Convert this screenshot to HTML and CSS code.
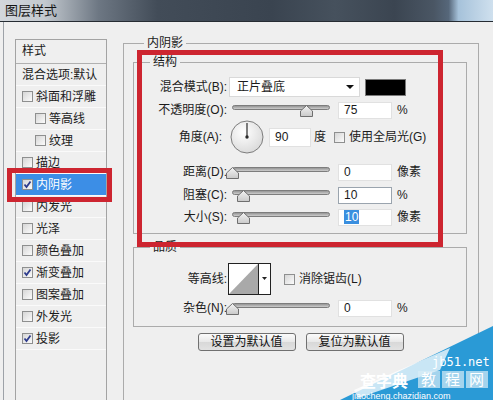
FILE: index.html
```html
<!DOCTYPE html>
<html lang="zh-CN">
<head>
  <meta charset="UTF-8" />
  <title>图层样式</title>
  <link rel="stylesheet" href="styles.css">
</head>
<body>
  <svg class="defs" width="0" height="0">
    <defs>
      <linearGradient id="trk" x1="0" y1="0" x2="0" y2="1">
        <stop offset="0" stop-color="#8c8c8c"/>
        <stop offset="1" stop-color="#d6d6d6"/>
      </linearGradient>
      <linearGradient id="thb" x1="0" y1="0" x2="0" y2="1">
        <stop offset="0" stop-color="#f4f4f4"/>
        <stop offset="1" stop-color="#c9c9c9"/>
      </linearGradient>
      <radialGradient id="dialg" cx="0.4" cy="0.35" r="0.7">
        <stop offset="0" stop-color="#ffffff"/>
        <stop offset="1" stop-color="#d9d9d9"/>
      </radialGradient>
    </defs>
  </svg>

  <div class="titlebar">图层样式</div>

  <div class="dialog">
    <div class="style-list">
      <div class="list-head">样式</div>
      <div class="list-item">混合选项:默认</div>
      <div class="list-item"><i class="cb"></i>斜面和浮雕</div>
      <div class="list-item sub"><i class="cb"></i>等高线</div>
      <div class="list-item sub"><i class="cb"></i>纹理</div>
      <div class="list-item"><i class="cb"></i>描边</div>
      <div class="list-item selected"><i class="cb"><svg viewBox="0 0 9 9"><path d="M1.5 4.5 L3.5 7 L7.5 1.5"/></svg></i>内阴影</div>
      <div class="list-item"><i class="cb"></i>内发光</div>
      <div class="list-item"><i class="cb"></i>光泽</div>
      <div class="list-item"><i class="cb"></i>颜色叠加</div>
      <div class="list-item"><i class="cb"><svg viewBox="0 0 9 9"><path d="M1.5 4.5 L3.5 7 L7.5 1.5"/></svg></i>渐变叠加</div>
      <div class="list-item"><i class="cb"></i>图案叠加</div>
      <div class="list-item"><i class="cb"></i>外发光</div>
      <div class="list-item"><i class="cb"><svg viewBox="0 0 9 9"><path d="M1.5 4.5 L3.5 7 L7.5 1.5"/></svg></i>投影</div>
    </div>

    <fieldset class="group outer">
      <legend>内阴影</legend>

      <fieldset class="group inner structure">
        <legend>结构</legend>

        <div class="row r-blend">
          <span class="lbl">混合模式(B):</span>
          <div class="select">正片叠底<i class="arrow"></i></div>
          <div class="swatch"></div>
        </div>

        <div class="row r-opacity">
          <span class="lbl">不透明度(O):</span>
          <svg class="slider" width="104" height="20" viewBox="0 0 104 20">
            <rect class="track" x="6.5" y="5.5" width="97" height="4" rx="2"/>
            <path class="thumb" transform="translate(80.5 0)" d="M-6 16.5 H6 V11 L0 5.5 L-6 11 Z"/>
          </svg>
          <div class="field">75</div><span class="unit">%</span>
        </div>

        <div class="row r-angle">
          <span class="lbl">角度(A):</span>
          <svg class="dial" width="34" height="34" viewBox="0 0 34 34">
            <circle cx="17" cy="17" r="16" fill="url(#dialg)" stroke="#7d7d7d"/>
            <line x1="17" y1="17" x2="17" y2="3" stroke="#2a2a2a" stroke-width="1.2"/>
            <circle cx="17" cy="17" r="1.7" fill="#2a2a2a"/>
          </svg>
          <div class="field angle">90</div><span class="unit deg">度</span>
          <i class="cb global"></i><span class="cb-text">使用全局光(G)</span>
        </div>

        <div class="row r-distance">
          <span class="lbl">距离(D):</span>
          <svg class="slider" width="104" height="20" viewBox="0 0 104 20">
            <rect class="track" x="6.5" y="5.5" width="97" height="4" rx="2"/>
            <path class="thumb" transform="translate(6.5 0)" d="M-6 16.5 H6 V11 L0 5.5 L-6 11 Z"/>
          </svg>
          <div class="field">0</div><span class="unit">像素</span>
        </div>

        <div class="row r-choke">
          <span class="lbl">阻塞(C):</span>
          <svg class="slider" width="104" height="20" viewBox="0 0 104 20">
            <rect class="track" x="6.5" y="5.5" width="97" height="4" rx="2"/>
            <path class="thumb" transform="translate(17.5 0)" d="M-6 16.5 H6 V11 L0 5.5 L-6 11 Z"/>
          </svg>
          <div class="field focused">10</div><span class="unit">%</span>
        </div>

        <div class="row r-size">
          <span class="lbl">大小(S):</span>
          <svg class="slider" width="104" height="20" viewBox="0 0 104 20">
            <rect class="track" x="6.5" y="5.5" width="97" height="4" rx="2"/>
            <path class="thumb" transform="translate(17.5 0)" d="M-6 16.5 H6 V11 L0 5.5 L-6 11 Z"/>
          </svg>
          <div class="field"><span class="sel-text">10</span></div><span class="unit">像素</span>
        </div>
      </fieldset>

      <fieldset class="group inner quality">
        <legend>品质</legend>

        <div class="row r-contour">
          <span class="lbl">等高线:</span>
          <svg class="contour" width="43" height="32" viewBox="0 0 43 32">
            <rect x="0.5" y="0.5" width="42" height="31" fill="#fff" stroke="#222"/>
            <polygon points="1,31 30,1 30,31" fill="#a9a9a9"/>
            <line x1="30.5" y1="1" x2="30.5" y2="31" stroke="#222"/>
            <polygon points="34,14 39,14 36.5,17" fill="#222"/>
          </svg>
          <i class="cb aa"></i><span class="cb-text">消除锯齿(L)</span>
        </div>

        <div class="row r-noise">
          <span class="lbl">杂色(N):</span>
          <svg class="slider" width="104" height="20" viewBox="0 0 104 20">
            <rect class="track" x="6.5" y="5.5" width="97" height="4" rx="2"/>
            <path class="thumb" transform="translate(6.5 0)" d="M-6 16.5 H6 V11 L0 5.5 L-6 11 Z"/>
          </svg>
          <div class="field">0</div><span class="unit">%</span>
        </div>
      </fieldset>

      <div class="buttons">
        <button>设置为默认值</button>
        <button>复位为默认值</button>
      </div>
    </fieldset>
  </div>

  <!-- red marks drawn over the screenshot -->
  <div class="mark mark-list"></div>
  <div class="mark mark-struct"></div>

  <svg class="watermark" width="153" height="80" viewBox="0 0 153 80">
    <polygon points="0,80 153,6 153,80" fill="#2a9ad6"/>
    <polygon points="14,70 110,28 100,50 18,78" fill="#ffffff" opacity="0.75"/>
    <text x="92" y="46" class="wm-site">jb51.net</text>
    <rect x="78" y="51" width="22" height="17" class="wm-box"/>
    <rect x="102" y="51" width="22" height="17" class="wm-box"/>
    <rect x="126" y="51" width="22" height="17" class="wm-box"/>
    <text x="81" y="65" class="wm-cn">教</text>
    <text x="105" y="65" class="wm-cn">程</text>
    <text x="129" y="65" class="wm-cn">网</text>
    <text x="20" y="67" class="wm-big">查字典</text>
    <text x="12" y="79" class="wm-url">jiaocheng.chazidian.com</text>
  </svg>
</body>
</html>
```

FILE: styles.css
```css
* {
  box-sizing: border-box;
}

body {
  margin: 0;
  width: 493px;
  height: 400px;
  overflow: hidden;
  background: #efefef;
  color: #1b1b1b;
  font-family: "Liberation Sans", "Noto Sans CJK SC", sans-serif;
  font-size: 12px;
  line-height: 16px;
  position: relative;
}

.defs {
  position: absolute;
}

.titlebar {
  height: 22px;
  padding-left: 5px;
  display: flex;
  align-items: center;
  font-size: 13px;
  color: #151515;
  border-bottom: 1px solid #262c33;
  background: linear-gradient(90deg, #d3d7dc 0, #c3c9cf 9%, #6d7783 20%, #424c58 32%, #3a4450 55%, #46515d 68%, #3b4551 80%, #4a5664 88%, #56677a 91%, #a6c2da 93%, #cfe0ee 100%);
}

.dialog {
  display: flex;
  align-items: flex-start;
  height: 378px;
  overflow: hidden;
  margin-left: 3px;
  padding-left: 11px;
  border-left: 1px solid #9da2a8;
}

/* left style list */
.style-list {
  width: 92px;
  height: 361px;
  margin-top: 17px;
  border: 1px solid #a3a3a3;
  border-bottom: 0;
}

.list-head {
  height: 24px;
  padding-left: 6px;
  line-height: 23px;
  border-bottom: 1px solid #b0b0b0;
}

.list-item {
  height: 22px;
  display: flex;
  align-items: center;
  gap: 3px;
  padding-left: 6px;
  border-bottom: 1px solid #fafafa;
  white-space: nowrap;
}

.list-item.sub {
  padding-left: 19px;
}

.list-item.selected {
  background: #3c8ee6;
  color: #fff;
}

.cb {
  width: 11px;
  height: 11px;
  flex: none;
  border: 1px solid #8e8f8f;
  background: linear-gradient(135deg, #d6d6d6, #fbfbfb);
  display: inline-flex;
}

.cb svg {
  width: 9px;
  height: 9px;
}

.cb path {
  fill: none;
  stroke: #2d3b8c;
  stroke-width: 1.8;
}

/* right side groups */
.group {
  margin: 0;
  min-inline-size: 0;
  border: 1px solid #ababab;
}

.group legend {
  padding: 0 3px;
  line-height: 16px;
}

.outer {
  width: 356px;
  height: 365px;
  margin: 13px 0 0 16px;
  padding: 3px 10px 0 9px;
  border-bottom: 0;
}

.outer > legend {
  margin-left: 11px;
}

.inner {
  width: 334px;
  padding: 7px 0 6px 0;
}

.inner > legend {
  margin-left: 16px;
}

.quality {
  margin-top: 5px;
  padding: 8px 0 8px 0;
}

.row {
  display: flex;
  align-items: center;
  height: 20px;
  white-space: nowrap;
}

.lbl {
  width: 93px;
  margin-right: 2px;
  text-align: right;
}

.r-opacity { margin-top: 3px; }
.r-angle { height: 34px; }
.r-distance { margin-top: 8px; }
.r-choke { margin-top: 3px; }
.r-size { margin-top: 2px; }
.r-contour { height: 32px; }
.r-noise { margin-top: 3px; }

.r-angle .lbl {
  padding-right: 5px;
}

.select {
  position: relative;
  width: 131px;
  height: 20px;
  padding-left: 7px;
  line-height: 18px;
  background: #fff;
  border: 1px solid #d9d9d9;
}

.arrow {
  position: absolute;
  right: 5px;
  top: 7px;
  border-left: 4px solid transparent;
  border-right: 4px solid transparent;
  border-top: 4px solid #111;
}

.swatch {
  width: 41px;
  height: 17px;
  margin-left: 5px;
  background: #000;
  border: 1px solid #7a7a7a;
}

.slider {
  margin-left: -3px;
  flex: none;
}

.track {
  fill: url(#trk);
  stroke: #7d7d7d;
}

.thumb {
  fill: url(#thb);
  stroke: #6f6f6f;
}

.field {
  width: 54px;
  height: 17px;
  margin-left: 8px;
  padding-left: 5px;
  line-height: 15px;
  background: #fff;
  border: 1px solid #e1e1e1;
}

.field.focused {
  border-color: #9aa4ae;
}

.sel-text {
  background: #3a8fdf;
  color: #fff;
  padding: 0 1px;
}

.unit {
  margin-left: 5px;
}

.dial {
  margin-left: 1px;
  flex: none;
}

.field.angle {
  width: 42px;
  height: 19px;
  margin-left: 5px;
  line-height: 17px;
}

.unit.deg {
  margin-left: 3px;
}

.cb.global {
  margin-left: 8px;
}

.cb-text {
  margin-left: 4px;
}

.contour {
  margin-left: -1px;
  flex: none;
}

.cb.aa {
  margin-left: 13px;
}

.buttons {
  display: flex;
  justify-content: center;
  gap: 10px;
  margin-top: 6px;
}

.buttons button {
  width: 98px;
  height: 18px;
  padding: 0;
  font: inherit;
  line-height: 16px;
  color: #111;
  border: 1px solid #707070;
  border-radius: 3px;
  background: linear-gradient(#fbfbfb, #e8e8e8 50%, #d8d8d8 51%, #e2e2e2);
}

/* overlays */
.mark {
  position: absolute;
  border: 5px solid #cd2530;
}

.mark-list {
  left: 7px;
  top: 168px;
  width: 105px;
  height: 34px;
}

.mark-struct {
  left: 137px;
  top: 50px;
  width: 306px;
  height: 197px;
}

.watermark {
  position: absolute;
  left: 340px;
  top: 320px;
}

.wm-site {
  fill: #fff;
  font-family: "DejaVu Sans Mono", monospace;
  font-size: 12px;
}

.wm-box {
  fill: #d8ecf6;
  opacity: 0.7;
}

.wm-cn {
  fill: #fff;
  font-family: "Noto Sans CJK SC", sans-serif;
  font-size: 15px;
}

.wm-big {
  fill: #fff;
  font-family: "Noto Sans CJK SC", sans-serif;
  font-size: 16px;
  font-weight: bold;
}

.wm-url {
  fill: #fff;
  font-family: "Liberation Sans", sans-serif;
  font-size: 9px;
}
```
